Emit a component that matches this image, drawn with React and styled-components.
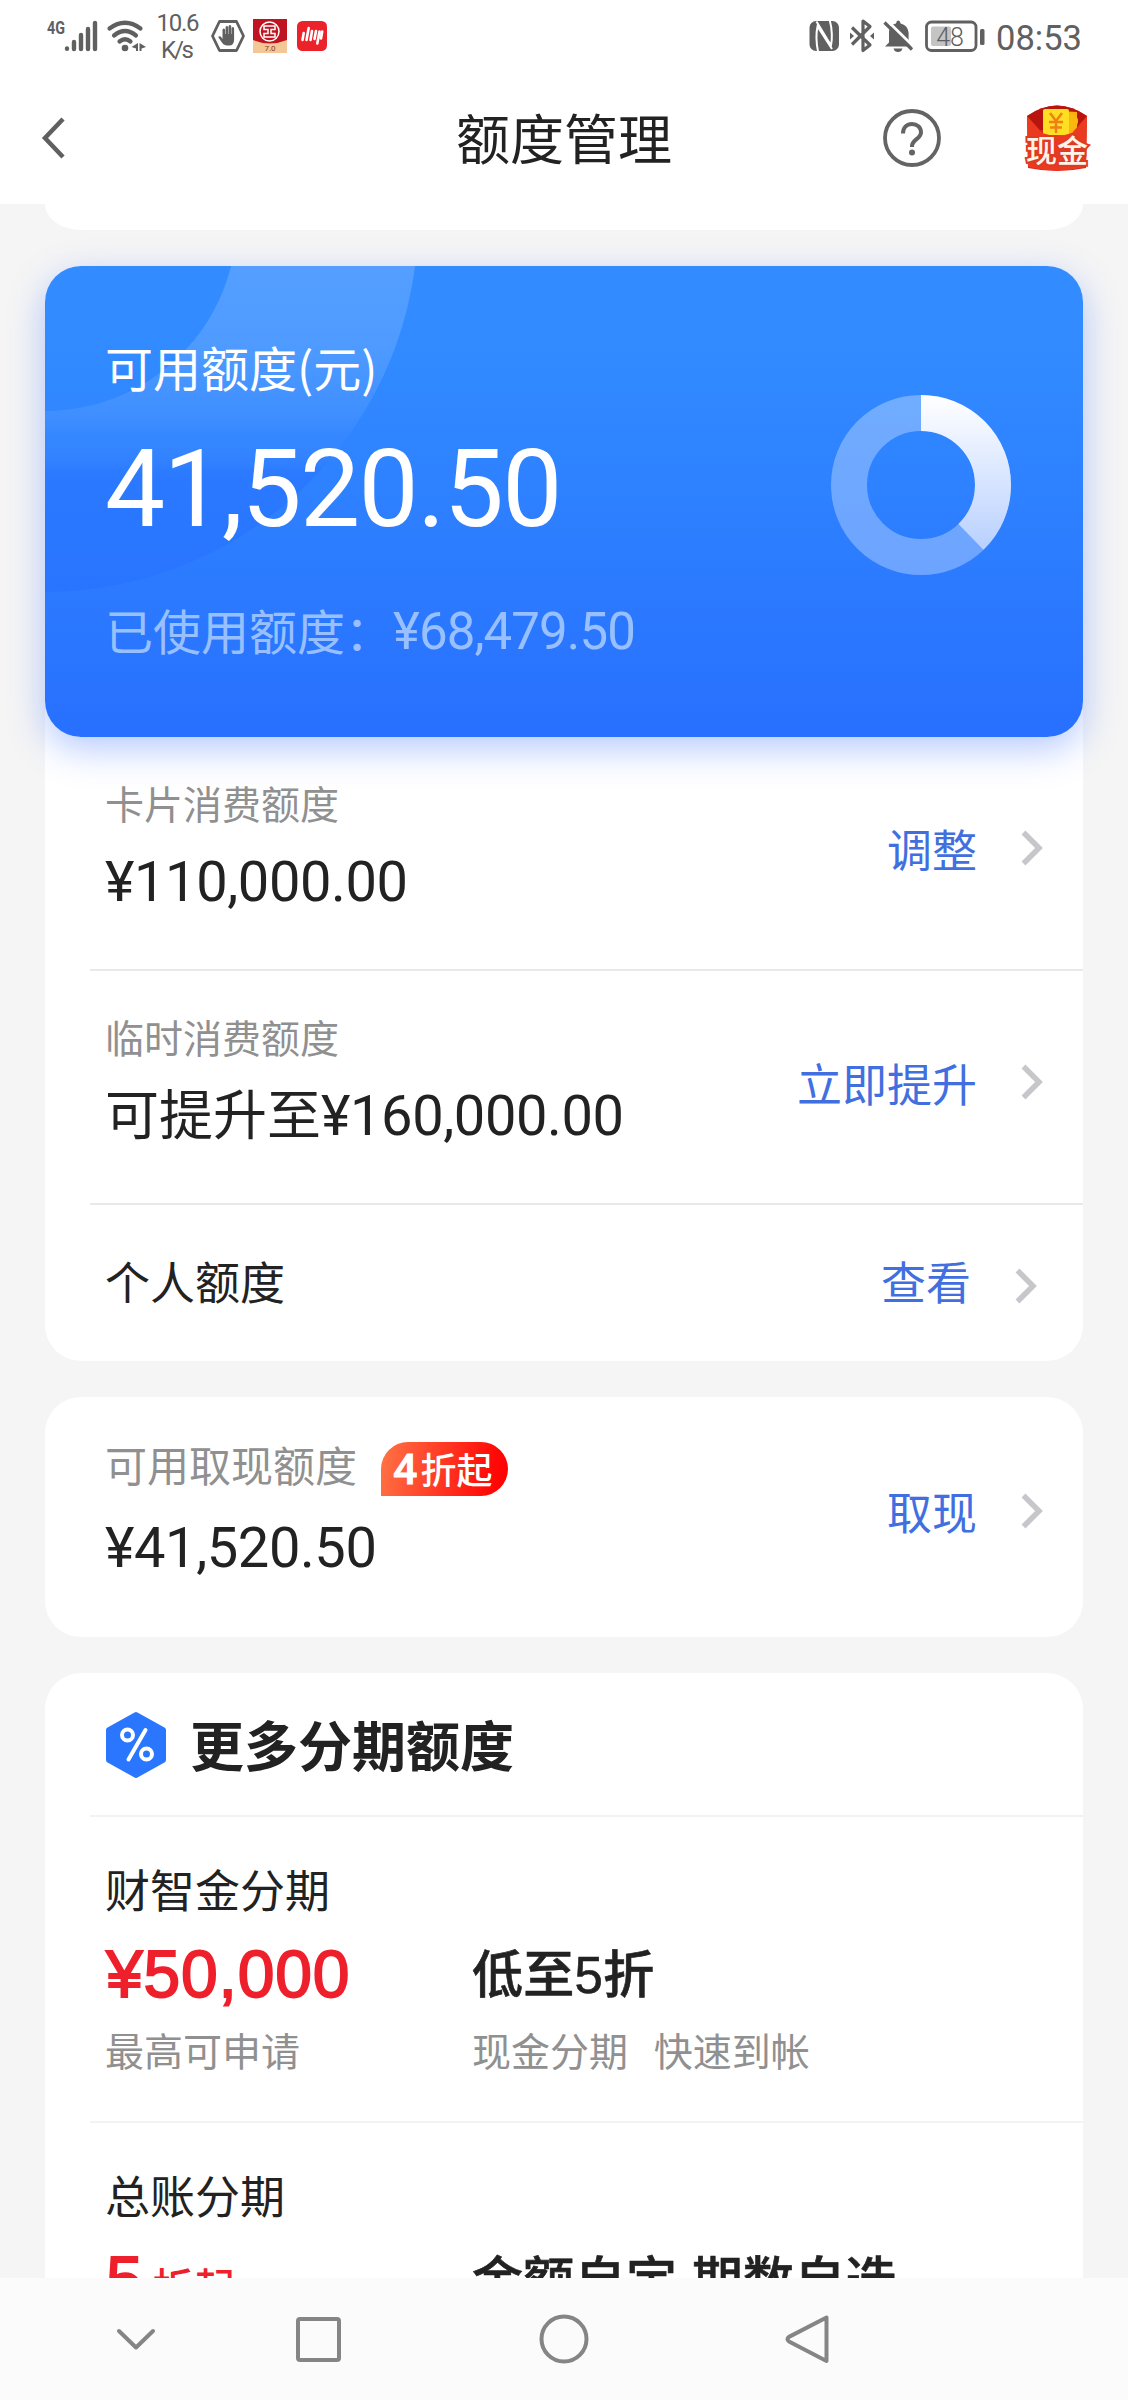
import styled, { createGlobalStyle } from "styled-components";

const CJK = `"Noto Sans CJK SC", sans-serif`;
const DIGITS = `Roboto, "Noto Sans CJK SC", sans-serif`;

const GlobalStyle = createGlobalStyle`
  * {
    box-sizing: border-box;
  }
  body {
    margin: 0;
    background: #f5f5f5;
    color: #222;
    font-family: ${CJK};
  }
  svg {
    display: block;
    flex: none;
  }
`;

const Screen = styled.div`
  display: flex;
  flex-direction: column;
  width: 1128px;
  height: 2400px;
  overflow: hidden;
`;

const StatusBar = styled.div`
  display: flex;
  flex: none;
  justify-content: space-between;
  height: 72px;
  background: #fff;
`;

const Clock = styled.span`
  width: 88px;
  margin-left: 10px;
  font-family: ${DIGITS};
  font-size: 34.5px;
  line-height: 76px;
  color: #606060;
  white-space: nowrap;
`;

const StatusGroup = styled.div`
  display: flex;
  padding: ${p => (p.$right ? "0 44px 0 0" : "0 0 0 44px")};
`;

const Header = styled.header`
  display: grid;
  flex: none;
  grid-template-columns: 1fr auto 1fr;
  align-items: center;
  height: 132px;
  padding: 0 37px 0 40px;
  background: #fff;
`;

const Title = styled.h1`
  margin: 0 3px 0 0;
  padding-bottom: 3px;
  font-size: 54px;
  font-weight: 400;
  line-height: 64px;
`;

const BackIcon = styled.svg`
  margin-bottom: 1px;
`;

const HeaderActions = styled.div`
  display: flex;
  align-items: center;
  justify-content: flex-end;
  gap: 82px;
`;

const Main = styled.main`
  display: flex;
  flex: 1;
  flex-direction: column;
  gap: 36px;
  min-height: 0;
  padding: 0 45px;
  overflow: hidden;
`;

const Card = styled.section`
  flex: none;
  border-radius: 36px;
  background: #fff;
`;

const CardTail = styled.div`
  flex: none;
  height: 26px;
  background: #fff;
  border-radius: 0 0 36px 36px / 0 0 26px 26px;
`;

const Hero = styled.div`
  position: relative;
  display: flex;
  justify-content: space-between;
  height: 471px;
  padding: 72px 72px 0 60px;
  border-radius: 36px;
  background: linear-gradient(180deg, #338cff 0%, #318aff 20%, #2870ff 100%);
  box-shadow: 0 12px 36px rgba(40, 100, 255, 0.34);
  color: #fff;
`;

const HeroRings = styled.svg`
  position: absolute;
  top: 0;
  left: 0;
`;

const HeroInfo = styled.div`
  position: relative;
`;

const HeroLabel = styled.div`
  font-size: 48px;
  line-height: 56px;
`;

const HeroAmount = styled.div`
  margin-top: 38px;
  font-family: ${DIGITS};
  font-size: 107px;
  line-height: 116px;
  letter-spacing: -1.6px;
`;

const HeroUsed = styled.div`
  display: flex;
  align-items: center;
  margin-top: 50px;
  font-size: 48px;
  line-height: 56px;
  color: #98c0ff;
`;

const UsedAmount = styled.span`
  font-family: ${DIGITS};
  font-size: 51px;
  letter-spacing: -0.9px;
  padding-top: 6px;
`;

const Donut = styled.svg`
  position: relative;
  margin-top: 57px;
`;

const Row = styled.div`
  display: flex;
  align-items: center;
  justify-content: space-between;
  height: ${p => p.$height}px;
  margin-left: 45px;
  padding: 0 ${p => p.$right || 40}px ${p => p.$bottom}px 15px;
  border-bottom: ${p => (p.$line ? "2px solid #e9e9e9" : "0")};
`;

const Label = styled.div`
  font-size: ${p => p.$size || 39}px;
  line-height: ${p => p.$height || 50}px;
  color: #909090;
`;

const Amount = styled.div`
  display: flex;
  align-items: flex-start;
  margin-top: ${p => p.$gap}px;
  height: 64px;
  font-size: 54px;
  line-height: 64px;
`;

const AmountPrefix = styled.span`
  margin-top: -4px;
`;

const Money = styled.span`
  font-family: ${DIGITS};
  font-size: 56px;
  letter-spacing: -0.4px;
`;

const RowName = styled.div`
  font-size: 45px;
  line-height: 56px;
`;

const Action = styled.a`
  display: flex;
  align-items: center;
  gap: 44px;
  padding-top: ${p => p.$shift || 0}px;
  font-size: 45px;
  line-height: 56px;
  color: #426fe0;
`;

const Arrow = styled.svg`
  margin-top: ${p => p.$drop || 0}px;
`;

const LabelLine = styled.div`
  display: flex;
  align-items: flex-start;
  gap: 24px;
`;

const Badge = styled.span`
  display: flex;
  align-items: center;
  gap: 3px;
  height: 54px;
  padding: 0 16px 3px 12px;
  border-radius: 27px 27px 27px 0;
  background: linear-gradient(100deg, #ff7446 0%, #ff0a08 85%, #f00 100%);
  color: #fff;
  font-size: 36px;
  font-weight: 500;
`;

const BadgeNumber = styled.b`
  font-family: ${DIGITS};
  font-size: 43px;
  font-weight: 500;
  padding-top: 2px;
  -webkit-text-stroke: 0.8px #fff;
`;

const SectionHead = styled.div`
  display: flex;
  align-items: center;
  gap: 23px;
  height: 144px;
  margin-left: 45px;
  padding-left: 15px;
  border-bottom: 2px solid #f2f2f2;
`;

const SectionTitle = styled.h2`
  margin: 0;
  font-size: 54px;
  font-weight: 700;
  line-height: 64px;
`;

const Plan = styled.div`
  display: grid;
  grid-template-columns: 367px 1fr;
  grid-template-rows: 56px 66px 50px;
  height: 306px;
  margin-left: 45px;
  padding: 44px 0 0 15px;
  border-bottom: 2px solid #f3f3f3;
`;

const PlanName = styled.div`
  grid-column: 1 / 3;
  font-size: 45px;
  line-height: 56px;
`;

const PlanPrice = styled.div`
  margin: 24px 0 0 1px;
  font-family: "Liberation Sans", "Noto Sans CJK SC", sans-serif;
  font-size: 66px;
  line-height: 66px;
  letter-spacing: 0.8px;
  color: #ee202c;
  -webkit-text-stroke: 1.8px #ee202c;
`;

const PriceUnit = styled.span`
  margin-left: 9px;
  font-size: 41px;
  font-weight: 500;
  -webkit-text-stroke: 0;
`;

const PlanPitch = styled.div`
  margin-top: 26px;
  font-family: "Liberation Sans", "Noto Sans CJK SC", sans-serif;
  font-size: 51px;
  font-weight: 500;
  line-height: 66px;
  letter-spacing: 0.3px;
  white-space: pre;
  -webkit-text-stroke: 0.6px #222;
`;

const PlanNote = styled.div`
  margin-top: 41px;
  font-size: 39px;
  line-height: 50px;
  color: #909090;
  word-spacing: 17px;
`;

const NavBar = styled.nav`
  flex: none;
  height: 122px;
  background: #fbfbfb;
`;

const Chevron = ({ drop }) => (
  <Arrow $drop={drop} width="22" height="36" viewBox="0 0 22 36">
    <path d="M2.5 2.5 18 18 2.5 33.5" fill="none" stroke="#c7c7cb" strokeWidth="5.5" />
  </Arrow>
);

const StatusIcons = () => (
  <svg width="300" height="72" viewBox="44 0 300 72" fill="#606060">
    <text
      x="47"
      y="34"
      fontFamily="Roboto"
      fontWeight="700"
      fontSize="19"
      textLength="18"
      lengthAdjust="spacingAndGlyphs"
    >
      4G
    </text>
    <g stroke="#606060" strokeWidth="4.4" strokeLinecap="round">
      <path d="M67 48.5v.3M74 42v7M81 35v14M88 29v20M95 23v26" />
    </g>
    <g fill="none" stroke="#606060" strokeWidth="4.2" strokeLinecap="round">
      <path d="M109.5 28.5Q125 17 140.5 28.5" />
      <path d="M114 35.5Q125 26.5 136 35.5" />
      <path d="M119.5 41.5Q125 37 130.5 41.5" />
    </g>
    <circle cx="125" cy="48" r="3.3" />
    <path d="M138 43v8h-2v-2.5l-4.5-1.5zM139.5 43v8h2v-2.5l4.5-1.5z" />
    <g fontFamily="Roboto" fontSize="24" textAnchor="middle">
      <text x="178" y="31" textLength="43">10.6</text>
      <text x="177.500" y="58" textLength="33">K/s</text>
    </g>
    <path
      d="M219.5 21.500h17L243.500 36l-7 14.500h-17L212.500 36z"
      fill="none"
      stroke="#606060"
      strokeWidth="2.8"
      strokeLinejoin="round"
    />
    <path d="M222.5 39V29.5q1.3-2 2.6 0V34h.5V27q1.3-2 2.6 0v7h.4v-8q1.3-2 2.6 0v8h.4v-6q1.3-1.8 2.5 0v11.5q0 6-5 6-5 0-6.8-2.6l-4-5.6q.5-1.8 2.5-.7z" />
    <rect x="253" y="19" width="34" height="34" fill="#c01420" />
    <path d="M253 40q17 7 34 0v13h-34z" fill="#f3c796" />
    <circle cx="269.5" cy="31.5" r="9.5" fill="none" stroke="#fff" strokeWidth="1.5" />
    <path
      d="M264 26h11v3.5h-4v4h4V37h-11v-3.5h4v-4h-4z"
      fill="none"
      stroke="#fff"
      strokeWidth="1.5"
    />
    <text x="264.5" y="51" fontFamily="Roboto" fontSize="8" fill="#8d3b22">7.0</text>
    <rect x="297" y="21" width="30" height="30" rx="5.5" fill="#ec222a" />
    <path
      d="M302.5 40l1.2-7M306.500 40l2.200-12M310.500 40l1.500-9M314.500 39l1.500-8M317.300 43.500l2.200-12M321 38.500l1.200-7"
      stroke="#fff"
      strokeWidth="2.600"
      strokeLinecap="round"
    />
  </svg>
);

const SystemIcons = () => (
  <svg width="178" height="72" viewBox="808 0 178 72" fill="#606060">
    <rect x="809.5" y="21" width="29.5" height="30" rx="6.5" />
    <path
      d="M818 51.500C816.300 43 816.300 32 817.500 26.500L832 49M829.800 20.500C832.300 29 832.300 40 831 45.500L816.500 21.500"
      fill="none"
      stroke="#fff"
      strokeWidth="2"
    />
    <path
      d="M852 27.5l18 17.5-7 5.500V21l7 5.500-18 18"
      fill="none"
      stroke="#606060"
      strokeWidth="3.2"
      strokeLinejoin="round"
    />
    <path d="M850 32.5l4 3.5-4 3.500zM874 32.500l-4 3.500 4 3.500z" />
    <path d="M885 46.500l4-4V32q.5-7.500 7-8.500.5-3 2.300-3t2.300 3q7 1.500 8 9v9l4 5zM893.500 48.500h9q-1 3.500-4.500 3.500t-4.500-3.500z" />
    <path d="M887 20.500l29 28.500" stroke="#fff" strokeWidth="3" />
    <path d="M884.500 22.500L912 49.500" stroke="#606060" strokeWidth="3.2" />
    <rect x="926.5" y="22" width="49.5" height="28.5" rx="5" fill="none" stroke="#606060" strokeWidth="2.8" />
    <rect x="931" y="26.5" width="20" height="19.5" rx="2" fill="#c4c4c4" />
    <text x="950" y="45.5" fontFamily="Roboto" fontSize="25" fontWeight="300" textAnchor="middle">
      48
    </text>
    <rect x="980" y="29" width="4.5" height="16" rx="1.5" />
  </svg>
);

const HelpIcon = () => (
  <svg width="58" height="58" viewBox="0 0 58 58">
    <circle cx="29" cy="29" r="27" fill="none" stroke="#646464" strokeWidth="3.8" />
    <path
      d="M20 24.5c0-6 4-9.500 9-9.500s9 3.300 9 8.400c0 6-9 7.500-9 13.600v1"
      fill="none"
      stroke="#646464"
      strokeWidth="4"
    />
    <circle cx="29" cy="43.5" r="3" fill="#646464" />
  </svg>
);

const CashIcon = () => (
  <svg width="68" height="70" viewBox="0 0 68 70">
    <path d="M4 13Q34-8 64 13l-1 52q-29 6-58 0z" fill="#d9261c" />
    <path d="M4 13Q34-8 64 13l-12 14H17z" fill="#b9150f" />
    <path d="M20 7l34 2v18q-5 9-34 3z" fill="#ffae12" />
    <rect x="20" y="6" width="26" height="26" rx="2" fill="#ffdf22" />
    <path d="M46 11q10 1 9 8t-9 10z" fill="#f9b80e" />
    <path d="M4 13l15 17q15 5 30 0l15-17-1 51q-29 7-58 0z" fill="#ea3b20" />
    <path
      d="M27 10l6 8 6-8M33 18v12M26 19h14M27 24.500h12"
      fill="none"
      stroke="#f08016"
      strokeWidth="2.5"
    />
    <text
      x="34"
      y="59"
      fontFamily="Noto Sans CJK SC"
      fontSize="31"
      fontWeight="500"
      textAnchor="middle"
      fill="#fff3ea"
      stroke="#e03a20"
      strokeWidth="4"
      paintOrder="stroke"
    >
      现金
    </text>
  </svg>
);

const PercentIcon = () => (
  <svg width="62" height="68" viewBox="0 -1 62 68">
    <path
      d="M31 4 58 19v30L31 64 4 49V19z"
      fill="#2a76ff"
      stroke="#2a76ff"
      strokeWidth="6"
      strokeLinejoin="round"
    />
    <g fill="none" stroke="#fff" strokeWidth="4">
      <circle cx="22.5" cy="24" r="5.5" />
      <circle cx="41.5" cy="43" r="5.5" />
      <path d="M40.5 19 23.5 48.500" strokeLinecap="round" />
    </g>
  </svg>
);

// Ring of the given share, starting at twelve o'clock
const QuotaDonut = ({ share }) => {
  const r = 72;
  const length = 2 * Math.PI * r;
  return (
    <Donut width="180" height="180" viewBox="0 0 180 180" fill="none">
      <defs>
        <linearGradient id="share" x1="0" y1="0" x2="0" y2="180" gradientUnits="userSpaceOnUse">
          <stop offset="0" stopColor="#fff" />
          <stop offset="0.9" stopColor="#b5ceff" />
        </linearGradient>
        <mask id="arc">
          <circle
            cx="90"
            cy="90"
            r={r}
            stroke="#fff"
            strokeWidth="36"
            strokeDasharray={`${length * share} ${length}`}
            transform="rotate(-90 90 90)"
          />
        </mask>
      </defs>
      <circle cx="90" cy="90" r={r} stroke="#fff" strokeOpacity="0.31" strokeWidth="36" />
      <rect width="180" height="180" fill="url(#share)" mask="url(#arc)" />
    </Donut>
  );
};

const Rings = () => (
  <HeroRings width="420" height="340" viewBox="0 0 420 340">
    <defs>
      <linearGradient id="ring" x1="0" y1="0" x2="0" y2="326" gradientUnits="userSpaceOnUse">
        <stop offset="0" stopColor="#fff" stopOpacity="0.16" />
        <stop offset="0.25" stopColor="#fff" stopOpacity="0.14" />
        <stop offset="0.46" stopColor="#d8e4ff" stopOpacity="0.09" />
        <stop offset="0.53" stopColor="#6f9cff" stopOpacity="0.08" />
        <stop offset="0.64" stopColor="#1f60ff" stopOpacity="0.26" />
        <stop offset="1" stopColor="#2468ff" stopOpacity="0.3" />
      </linearGradient>
      <clipPath id="corner">
        <rect width="500" height="500" rx="36" />
      </clipPath>
    </defs>
    <g clipPath="url(#corner)">
      <path
        d="M373-47A373 373 0 0 1 0 326V145A192 192 0 0 0 192-47z"
        fill="url(#ring)"
      />
    </g>
  </HeroRings>
);

const NavIcons = () => (
  <svg width="1128" height="122" fill="none" stroke="#858585" strokeWidth="4" strokeLinejoin="round">
    <path d="M119 53 136 69.500l17-16.500" strokeLinecap="round" />
    <rect x="298" y="41" width="41" height="41" rx="2" />
    <circle cx="564" cy="61" r="22.5" />
    <path d="M826.5 39.500v43.500L789 63.500q-3-2.300 0-4.600z" />
  </svg>
);

const QuotaRow = ({ label, prefix, amount, action }) => (
  <Row $height={234} $bottom={15} $line>
    <div>
      <Label>{label}</Label>
      <Amount $gap={23}>
        {prefix && <AmountPrefix>{prefix}</AmountPrefix>}
        <Money>{amount}</Money>
      </Amount>
    </div>
    <Action $shift={6}>
      {action}
      <Chevron drop={-2} />
    </Action>
  </Row>
);

const App = () => (
  <Screen>
    <GlobalStyle />
    <StatusBar>
      <StatusGroup>
        <StatusIcons />
      </StatusGroup>
      <StatusGroup $right>
        <SystemIcons />
        <Clock>08:53</Clock>
      </StatusGroup>
    </StatusBar>
    <Header>
      <BackIcon width="26" height="42" viewBox="0 0 26 42">
        <path d="M23 2 5 21l18 19" fill="none" stroke="#606060" strokeWidth="4.5" />
      </BackIcon>
      <Title>额度管理</Title>
      <HeaderActions>
        <HelpIcon />
        <CashIcon />
      </HeaderActions>
    </Header>
    <Main>
      <CardTail />
      <Card>
        <Hero>
          <Rings />
          <HeroInfo>
            <HeroLabel>可用额度(元)</HeroLabel>
            <HeroAmount>41,520.50</HeroAmount>
            <HeroUsed>
              已使用额度：<UsedAmount>¥68,479.50</UsedAmount>
            </HeroUsed>
          </HeroInfo>
          <QuotaDonut share={41520.5 / 110000} />
        </Hero>
        <QuotaRow label="卡片消费额度" amount="¥110,000.00" action="调整" />
        <QuotaRow
          label="临时消费额度"
          prefix="可提升至"
          amount="¥160,000.00"
          action="立即提升"
        />
        <Row $height={156} $bottom={4} $right={46}>
          <RowName>个人额度</RowName>
          <Action>
            查看
            <Chevron drop={10} />
          </Action>
        </Row>
      </Card>
      <Card>
        <Row $height={240} $bottom={12}>
          <div>
            <LabelLine>
              <Label $size={42} $height={43}>
                可用取现额度
              </Label>
              <Badge>
                <BadgeNumber>4</BadgeNumber>折起
              </Badge>
            </LabelLine>
            <Amount $gap={20}>
              <Money>¥41,520.50</Money>
            </Amount>
          </div>
          <Action>
            取现
            <Chevron />
          </Action>
        </Row>
      </Card>
      <Card>
        <SectionHead>
          <PercentIcon />
          <SectionTitle>更多分期额度</SectionTitle>
        </SectionHead>
        <Plan>
          <PlanName>财智金分期</PlanName>
          <PlanPrice>¥50,000</PlanPrice>
          <PlanPitch>低至5折</PlanPitch>
          <PlanNote>最高可申请</PlanNote>
          <PlanNote>现金分期 快速到帐</PlanNote>
        </Plan>
        <Plan>
          <PlanName>总账分期</PlanName>
          <PlanPrice>
            5<PriceUnit>折起</PriceUnit>
          </PlanPrice>
          <PlanPitch>金额自定 期数自选</PlanPitch>
        </Plan>
      </Card>
    </Main>
    <NavBar>
      <NavIcons />
    </NavBar>
  </Screen>
);

export default App;
